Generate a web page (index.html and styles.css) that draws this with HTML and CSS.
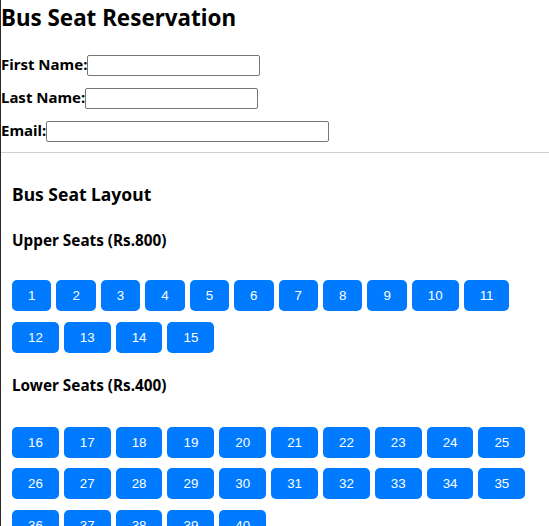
FILE: index.html
```html
<!DOCTYPE html>
<html lang="en">
<head>
<meta charset="utf-8">
<title>Bus Seat Reservation</title>
<link rel="stylesheet" href="styles.css">
</head>
<body>
<div class="page">
  <h1 class="title">Bus Seat Reservation</h1>
  <form class="form">
    <div class="field"><label class="label" for="fn">First Name:</label><input class="input" id="fn" type="text"></div>
    <div class="field"><label class="label" for="ln">Last Name:</label><input class="input" id="ln" type="text"></div>
    <div class="field"><label class="label" for="em">Email:</label><input class="input input--wide" id="em" type="email"></div>
  </form>
  <section class="layout">
    <h2 class="layout-title">Bus Seat Layout</h2>
    <h3 class="group-title">Upper Seats (Rs.800)</h3>
    <div class="seats">
      <button class="seat">1</button>
      <button class="seat">2</button>
      <button class="seat">3</button>
      <button class="seat">4</button>
      <button class="seat">5</button>
      <button class="seat">6</button>
      <button class="seat">7</button>
      <button class="seat">8</button>
      <button class="seat">9</button>
      <button class="seat">10</button>
      <button class="seat">11</button>
      <button class="seat">12</button>
      <button class="seat">13</button>
      <button class="seat">14</button>
      <button class="seat">15</button>
    </div>
    <h3 class="group-title group-title--lower">Lower Seats (Rs.400)</h3>
    <div class="seats seats--lower">
      <button class="seat">16</button>
      <button class="seat">17</button>
      <button class="seat">18</button>
      <button class="seat">19</button>
      <button class="seat">20</button>
      <button class="seat">21</button>
      <button class="seat">22</button>
      <button class="seat">23</button>
      <button class="seat">24</button>
      <button class="seat">25</button>
      <button class="seat">26</button>
      <button class="seat">27</button>
      <button class="seat">28</button>
      <button class="seat">29</button>
      <button class="seat">30</button>
      <button class="seat">31</button>
      <button class="seat">32</button>
      <button class="seat">33</button>
      <button class="seat">34</button>
      <button class="seat">35</button>
      <button class="seat">36</button>
      <button class="seat">37</button>
      <button class="seat">38</button>
      <button class="seat">39</button>
      <button class="seat">40</button>
    </div>
  </section>
</div>
</body>
</html>
```

FILE: styles.css
```css
html, body {
  margin: 0;
  padding: 0;
  background: #fff;
}

body {
  font-family: "Noto Sans", "Open Sans", sans-serif;
  color: #000;
}

.page {
  border-left: 1px solid #2b2b2b;
  padding-top: 3px;
  min-height: 600px;
}

.title {
  margin: 0;
  font-size: 22.4px;
  line-height: 30px;
  font-weight: 700;
}

.form {
  margin: 22px 0 0;
}

.field {
  display: flex;
  align-items: flex-start;
  height: 21px;
  margin-bottom: 12px;
}

.field:last-child {
  margin-bottom: 10px;
}

.label {
  font-weight: 700;
  font-size: 15px;
  line-height: 19px;
}

.input {
  box-sizing: border-box;
  width: 173px;
  height: 21px;
  margin: 0;
  padding: 1px 2px;
  border: 1px solid #767676;
  border-radius: 2px;
  background: #fff;
  font: 13.33px "Liberation Sans", Arial, sans-serif;
}

.input--wide {
  width: 283px;
}

.layout {
  border-top: 1px solid #cfcfcf;
  padding: 10px 11px 0 11px;
}

.layout-title {
  margin: 19px 0 0;
  font-size: 17.5px;
  line-height: 24px;
  font-weight: 700;
}

.group-title {
  margin: 24px 0 0;
  font-size: 15.3px;
  line-height: 21px;
  font-weight: 700;
}

.group-title--lower {
  margin-top: 22px;
}

.seats {
  margin-top: 29px;
  display: flex;
  flex-wrap: wrap;
  gap: 10.5px 5px;
}

.seats--lower {
  margin-top: 31px;
}

.seat {
  margin: 0;
  padding: 8px 16px;
  border: 0;
  border-radius: 5px;
  background: #007bff;
  color: #fff;
  font-family: "Liberation Sans", Arial, sans-serif;
  font-size: 13.33px;
  line-height: 15px;
  cursor: pointer;
}
```
